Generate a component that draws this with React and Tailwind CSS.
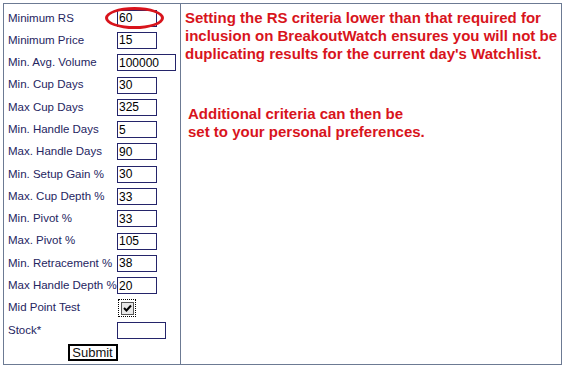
const rows = [
  { label: "Minimum RS", value: "60", w: "w-[40px]", ring: true },
  { label: "Minimum Price", value: "15", w: "w-[40px]" },
  { label: "Min. Avg. Volume", value: "100000", w: "w-[59px]" },
  { label: "Min. Cup Days", value: "30", w: "w-[40px]" },
  { label: "Max Cup Days", value: "325", w: "w-[40px]" },
  { label: "Min. Handle Days", value: "5", w: "w-[40px]" },
  { label: "Max. Handle Days", value: "90", w: "w-[40px]" },
  { label: "Min. Setup Gain %", value: "30", w: "w-[40px]" },
  { label: "Max. Cup Depth %", value: "33", w: "w-[40px]" },
  { label: "Min. Pivot %", value: "33", w: "w-[40px]" },
  { label: "Max. Pivot %", value: "105", w: "w-[40px]" },
  { label: "Min. Retracement %", value: "38", w: "w-[40px]" },
  { label: "Max Handle Depth %", value: "20", w: "w-[40px]" },
];

const Field = ({ value, w, ring }) => (
  <span className="relative inline-flex">
    <input
      defaultValue={value}
      className={`${w} h-[17px] border border-[#24246a] bg-white px-[1px] text-[12px] leading-none text-black outline-none`}
    />
    {ring && (
      <span className="pointer-events-none absolute left-[-12px] top-[-3px] h-[22px] w-[59px] rounded-[50%] border-[3px] border-[#d8141c]" />
    )}
  </span>
);

const App = () => {
  return (
    <div
      className="h-[367px] w-[565px] bg-white pl-[3px] pt-[3px]"
      style={{ fontFamily: '"Liberation Sans", Arial, sans-serif' }}
    >
      <div className="flex h-[362px] w-[559px] border border-[#6c7a93]">
        {/* criteria form */}
        <div className="w-[177px] border-r border-[#6c7a93] pl-[4px] pt-[3px] text-[11.5px] text-[#25255f]">
          {rows.map((r) => (
            <div key={r.label} className="flex h-[22.3px] items-center">
              <span className="w-[109px] whitespace-nowrap">{r.label}</span>
              <Field value={r.value} w={r.w} ring={r.ring} />
            </div>
          ))}
          <div className="flex h-[22.3px] items-center">
            <span className="w-[109px]">Mid Point Test</span>
            <span className="ml-[1px] flex h-[18px] w-[18px] items-center justify-center border border-dotted border-black">
              <span className="flex h-[13px] w-[13px] items-center justify-center border border-[#555] bg-[#e8e8e8]">
                <svg width="9" height="9" viewBox="0 0 9 9">
                  <path d="M1 4 L3.5 6.5 L8 1.5" fill="none" stroke="#000" strokeWidth="2" />
                </svg>
              </span>
            </span>
          </div>
          <div className="flex h-[22.3px] items-center">
            <span className="w-[109px]">Stock*</span>
            <input className="h-[17px] w-[49px] border border-[#24246a] bg-white outline-none" />
          </div>
          <div className="flex h-[22px] items-center justify-center pr-[3px]">
            <button className="h-[17px] w-[50px] border-[2px] border-black bg-white text-[13px] leading-none text-[#111]">
              Submit
            </button>
          </div>
        </div>

        {/* notes */}
        <div className="flex-1 pl-[4px] pt-[5px] text-[15px] font-bold leading-[18px] text-[#d8141c]">
          <p>
            Setting the RS criteria lower than that required for
            <br />
            inclusion on BreakoutWatch ensures you will not be
            <br />
            duplicating results for the current day's Watchlist.
          </p>
          <p className="mt-[42px] pl-[3px]">
            Additional criteria can then be
            <br />
            set to your personal preferences.
          </p>
        </div>
      </div>
    </div>
  );
};

export default App;
